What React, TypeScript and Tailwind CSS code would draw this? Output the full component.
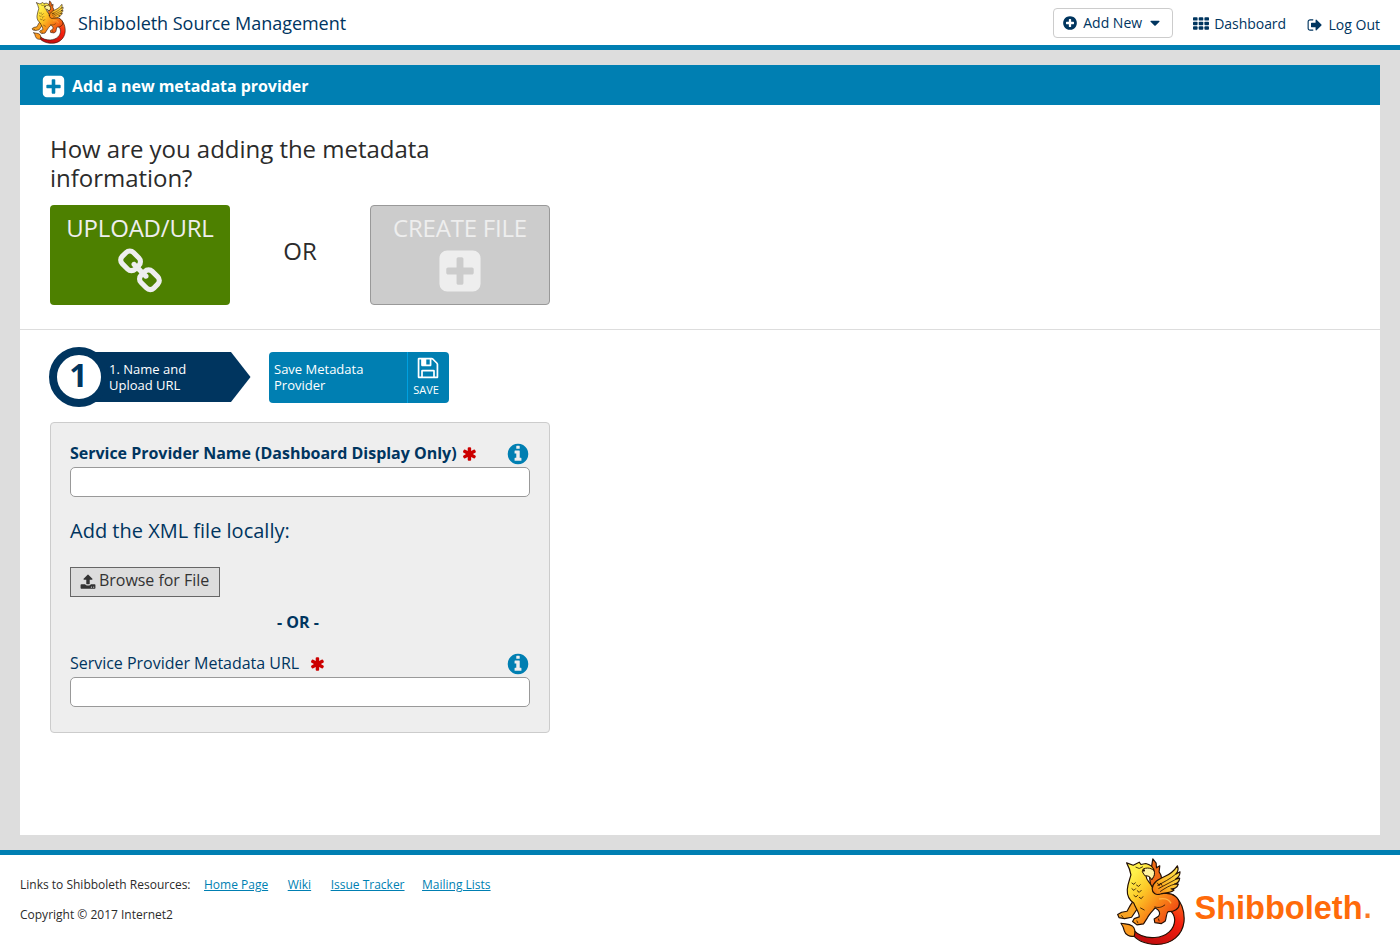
import React from "react";

const PATHS = {
  plusCircle:
    "M1344 960v-128q0-26-19-45t-45-19h-256v-256q0-26-19-45t-45-19h-128q-26 0-45 19t-19 45v256h-256q-26 0-45 19t-19 45v128q0 26 19 45t45 19h256v256q0 26 19 45t45 19h128q26 0 45-19t19-45v-256h256q26 0 45-19t19-45zm320-64q0 209-103 385.5t-279.5 279.5-385.5 103-385.5-103-279.5-279.5-103-385.5 103-385.5 279.5-279.5 385.5-103 385.5 103 279.5 279.5 103 385.5z",
  plusSquare:
    "M1408 960v-128q0-26-19-45t-45-19h-320v-320q0-26-19-45t-45-19h-128q-26 0-45 19t-19 45v320h-320q-26 0-45 19t-19 45v128q0 26 19 45t45 19h320v320q0 26 19 45t45 19h128q26 0 45-19t19-45v-320h320q26 0 45-19t19-45zm256-544v960q0 119-84.5 203.5t-203.5 84.5h-960q-119 0-203.5-84.5t-84.5-203.5v-960q0-119 84.5-203.5t203.5-84.5h960q119 0 203.5 84.5t84.5 203.5z",
  chain:
    "M1520 1216q0-40-28-68l-208-208q-28-28-68-28-42 0-72 32 3 3 19 18.5t21.5 21.5 15 19 13 25.5 3.5 27.5q0 40-28 68t-68 28q-15 0-27.5-3.5t-25.5-13-19-15-21.5-21.5-18.5-19q-33 31-33 73 0 40 28 68l206 207q27 27 68 27 40 0 68-26l147-146q28-28 28-67zm-703-705q0-40-28-68l-206-207q-28-28-68-28-39 0-68 27l-147 146q-28 28-28 67 0 40 28 68l208 208q27 27 68 27 42 0 72-31-3-3-19-18.5t-21.5-21.5-15-19-13-25.5-3.5-27.5q0-40 28-68t68-28q15 0 27.5 3.5t25.5 13 19 15 21.5 21.5 18.5 19q33-31 33-73zm895 705q0 120-85 203l-147 146q-83 83-203 83-121 0-204-85l-206-207q-83-83-83-203 0-123 88-209l-88-88q-86 88-208 88-120 0-204-84l-208-208q-84-84-84-204t85-203l147-146q83-83 203-83 121 0 204 85l206 207q83 83 83 203 0 123-88 209l88 88q86-88 208-88 120 0 204 84l208 208q84 84 84 204z",
  caretDown:
    "M1408 704q0 26-19 45l-448 448q-19 19-45 19t-45-19l-448-448q-19-19-19-45t19-45 45-19h896q26 0 45 19t19 45z",
  signOut:
    "M704 1440q0 4 1 20t.5 26.5-3 23.5-10 19.5-20.5 6.5h-320q-119 0-203.5-84.5t-84.5-203.5v-704q0-119 84.5-203.5t203.5-84.5h320q13 0 22.5 9.5t9.5 22.5q0 4 1 20t.5 26.5-3 23.5-10 19.5-20.5 6.5h-320q-66 0-113 47t-47 113v704q0 66 47 113t113 47h312l11.5 1 11.5 3 8 5.5 7 9 2 13.5zm928-544q0 26-19 45l-544 544q-19 19-45 19t-45-19-19-45v-288h-448q-26 0-45-19t-19-45v-384q0-26 19-45t45-19h448v-288q0-26 19-45t45-19 45 19l544 544q19 19 19 45z",
  asterisk:
    "M1482 1050q46 26 59.5 77.5t-12.5 97.5l-64 110q-26 46-77.5 59.5t-97.5-12.5l-266-153v307q0 52-38 90t-90 38h-128q-52 0-90-38t-38-90v-307l-266 153q-46 26-97.5 12.5t-77.5-59.5l-64-110q-26-46-12.5-97.5t59.5-77.5l266-154-266-154q-46-26-59.5-77.5t12.5-97.5l64-110q26-46 77.5-59.5t97.5 12.5l266 153v-307q0-52 38-90t90-38h128q52 0 90 38t38 90v307l266-153q46-26 97.5-12.5t77.5 59.5l64 110q26 46 12.5 97.5t-59.5 77.5l-266 154z",
  infoCircle:
    "M1152 1376v-160q0-14-9-23t-23-9h-96v-512q0-14-9-23t-23-9h-320q-14 0-23 9t-9 23v160q0 14 9 23t23 9h96v320h-96q-14 0-23 9t-9 23v160q0 14 9 23t23 9h448q14 0 23-9t9-23zm-128-896v-160q0-14-9-23t-23-9h-192q-14 0-23 9t-9 23v160q0 14 9 23t23 9h192q14 0 23-9t9-23zm640 416q0 209-103 385.5t-279.5 279.5-385.5 103-385.5-103-279.5-279.5-103-385.5 103-385.5 279.5-279.5 385.5-103 385.5 103 279.5 279.5 103 385.5z",
  upload:
    "M1344 1472q0-26-19-45t-45-19-45 19-19 45 19 45 45 19 45-19 19-45zm256 0q0-26-19-45t-45-19-45 19-19 45 19 45 45 19 45-19 19-45zm128-224v320q0 40-28 68t-68 28h-1472q-40 0-68-28t-28-68v-320q0-40 28-68t68-28h427q21 56 70.5 92t110.5 36h256q61 0 110.5-36t70.5-92h427q40 0 68 28t28 68zm-325-648q-17 40-59 40h-256v448q0 26-19 45t-45 19h-256q-26 0-45-19t-19-45v-448h-256q-42 0-59-40-17-39 14-69l448-448q18-19 45-19t45 19l448 448q31 30 14 69z",
  floppy:
    "M512 1536h768v-384h-768v384zm896 0h128v-896q0-14-10-38.5t-20-34.5l-281-281q-10-10-34-20t-39-10v416q0 40-28 68t-68 28h-576q-40 0-68-28t-28-68v-416h-128v1280h128v-416q0-40 28-68t68-28h832q40 0 68 28t28 68v416zm-384-928v-320q0-13-9.5-22.5t-22.5-9.5h-192q-13 0-22.5 9.5t-9.5 22.5v320q0 13 9.5 22.5t22.5 9.5h192q13 0 22.5-9.5t9.5-22.5zm640 32v928q0 40-28 68t-68 28h-1344q-40 0-68-28t-28-68v-1344q0-40 28-68t68-28h928q40 0 88 20t76 48l280 280q28 28 48 76t20 88z",
};

function Icon({ name, className }: { name: keyof typeof PATHS; className: string }) {
  return (
    <svg viewBox="0 0 1792 1792" fill="currentColor" className={`shrink-0 ${className}`} aria-hidden="true">
      <path d={PATHS[name]} />
    </svg>
  );
}

function GridIcon({ className }: { className: string }) {
  return (
    <svg viewBox="0 0 1792 1792" fill="currentColor" className={`shrink-0 ${className}`} aria-hidden="true">
      {[128, 640, 1152].map((y) =>
        [0, 640, 1280].map((x) => <rect key={`${x}-${y}`} x={x} y={y} width="512" height="384" rx="96" />),
      )}
    </svg>
  );
}

function Griffin({ id, className }: { id: string; className: string }) {
  const body = `${id}-body`;
  const tail = `${id}-tail`;
  const wing = `${id}-wing`;
  return (
    <svg viewBox="21 21 208 267" className={`shrink-0 ${className}`} aria-hidden="true">
      <defs>
        <linearGradient id={body} gradientUnits="userSpaceOnUse" x1="75" y1="70" x2="215" y2="190">
          <stop offset="0" stopColor="#fff04a" />
          <stop offset=".3" stopColor="#fdc928" />
          <stop offset=".6" stopColor="#f98a18" />
          <stop offset="1" stopColor="#ee3a12" />
        </linearGradient>
        <linearGradient id={tail} gradientUnits="userSpaceOnUse" x1="200" y1="140" x2="120" y2="275">
          <stop offset="0" stopColor="#f6701a" />
          <stop offset=".4" stopColor="#f5200f" />
          <stop offset="1" stopColor="#c40d0d" />
        </linearGradient>
        <linearGradient id={wing} gradientUnits="userSpaceOnUse" x1="135" y1="125" x2="205" y2="60">
          <stop offset="0" stopColor="#f47a12" />
          <stop offset=".4" stopColor="#fdb526" />
          <stop offset="1" stopColor="#ffe14a" />
        </linearGradient>
      </defs>
      <g stroke="#241004" strokeWidth="3.5" strokeLinejoin="round" strokeLinecap="round">
        <path fill={`url(#${tail})`} d="M192 134C218 150 229 184 226 216C221 256 189 284 143 284C107 283 79 268 66 247L73 240C90 258 112 265 138 263C175 260 197 238 198 210C198 196 192 188 182 180Z" />
        <path fill="#fb9a20" d="M36 220C49 223 60 222 70 228C79 235 79 248 76 259C62 262 49 254 46 243C44 234 41 227 36 220Z" />
        <path fill="#f06a14" d="M117 48L128 50L132 26L142 39L143 53L153 47L151 65C160 77 160 94 153 108L126 108Z" />
        <path fill="#f9a322" d="M76 150C66 160 60 174 54 184L38 187L26 194L30 203L47 206L68 202L88 172Z" />
        <path fill={`url(#${body})`} d="M53 38L73 45L91 36L96 43L111 40C124 43 135 53 137 66C138 76 132 83 129 88C125 79 116 75 111 76C112 91 124 97 128 108C138 126 153 132 171 130C195 129 212 145 212 162C212 176 196 186 178 185C171 192 174 204 169 214L158 221L138 218L136 207L149 199C157 190 151 180 139 174C130 184 121 192 116 203L104 222L84 225L71 215L76 206L91 201C92 187 80 175 75 160C62 151 54 137 55 119C56 101 63 87 66 74C64 63 59 49 53 38Z" />
        <path fill="#fff2a0" d="M104 56C121 49 136 58 137 67C138 77 132 84 128 88C124 78 115 76 108 77L101 66Z" strokeWidth="3" />
        <path fill={`url(#${wing})`} d="M130 116C132 96 149 88 166 80C183 73 197 61 206 47C210 56 208 65 201 72L214 65C214 76 209 83 201 87L213 84C212 94 205 100 198 102L209 102C206 113 195 117 187 116L196 120C183 131 165 128 155 132C141 137 130 128 130 116Z" />
        <path fill="none" strokeWidth="2.5" d="M147 106C164 96 184 87 200 73M150 115C167 106 184 97 201 88M155 124C170 113 184 106 198 102M146 99L151 107L155 99L160 106" />
        <path fill="none" strokeWidth="2.5" d="M81 51L91 55L101 50M69 99L75 103L79 98M83 105L89 109L94 104M69 116L75 121L80 116M85 122L91 127L97 121M75 136L81 141L86 136M91 142L97 146L102 140M138 171C152 175 160 171 168 165M95 174L106 180M38 197L42 202M84 213L87 219M149 207L151 213" />
      </g>
      <circle cx="105" cy="61" r="3.5" fill="#241004" />
      <path d="M151 147Q177 142 187 160" stroke="#ffb043" strokeWidth="4" fill="none" />
    </svg>
  );
}

function Field({ label, gap, bold }: { label: string; gap: string; bold?: boolean }) {
  return (
    <div>
      <div className="flex h-[26px] items-center">
        <span className={bold ? "pb-[2px] text-[16px] font-bold tracking-[-0.02px]" : "pb-[2px] text-[16px] tracking-[-0.02px]"}>
          {label}
        </span>
        <Icon name="asterisk" className={`size-4 text-[#cc0000] ${gap}`} />
        <Icon name="infoCircle" className="ml-auto size-6 text-[#007fb2]" />
      </div>
      <input className="block h-[30px] w-full rounded-[5px] border border-[#999] bg-white px-2 outline-none" />
    </div>
  );
}

export default function App() {
  return (
    <div className="flex h-[950px] w-[1400px] flex-col overflow-hidden bg-white font-['Open_Sans',sans-serif] text-[#2b2b2b]">
      <header className="flex h-[50px] shrink-0 items-start border-b-[5px] border-[#007fb2] pr-5 pl-[31px] text-[#00355f]">
        <Griffin id="top" className="h-[44px] w-[35px]" />
        <h1 className="ml-3 pt-[9px] text-[18px] leading-[28px] tracking-[-0.03px] whitespace-nowrap">Shibboleth Source Management</h1>
        <nav className="ml-auto flex items-start text-[14px] leading-5">
          <button className="mt-2 flex h-[30px] w-[120px] items-center rounded-[4px] border border-[#ccc] pl-2">
            <Icon name="plusCircle" className="size-4" />
            <span className="ml-[5px]">Add New</span>
            <Icon name="caretDown" className="ml-[5px] size-4" />
          </button>
          <a className="mt-[14px] ml-5 flex items-center">
            <GridIcon className="size-4" />
            <span className="ml-[5px] tracking-[-0.05px]">Dashboard</span>
          </a>
          <a className="mt-[15px] ml-[21px] flex items-center">
            <Icon name="signOut" className="size-4" />
            <span className="ml-[5.5px]">Log Out</span>
          </a>
        </nav>
      </header>

      <main className="h-[800px] shrink-0 bg-[#ddd] px-5 py-[15px]">
        <section className="h-[770px] bg-white">
          <div className="flex h-10 items-center bg-[#007fb2] pl-[21px] text-white">
            <Icon name="plusSquare" className="mt-[2px] size-[25px]" />
            <h2 className="ml-[6px] pt-[2px] text-[16px] font-bold tracking-[-0.04px]">Add a new metadata provider</h2>
          </div>

          <div className="h-[225px] border-b border-[#ddd] px-[30px] pt-[29px]">
            <h3 className="w-[500px] pr-20 text-[24px] leading-[29px] tracking-[-0.03px]">How are you adding the metadata information?</h3>
            <div className="mt-[13px] flex w-[500px] items-center justify-between text-[24px]">
              <button className="flex h-[100px] w-[180px] flex-col items-center rounded-[4px] bg-[#4d8000] pt-[6px] text-[#eee]">
                <span className="leading-[34px] tracking-[-0.2px]">UPLOAD/URL</span>
                <Icon name="chain" className="mt-[3px] size-[48px]" />
              </button>
              <span className="pb-2">OR</span>
              <button className="flex h-[100px] w-[180px] flex-col items-center rounded-[4px] border border-[#999] bg-[#ccc] pt-[5px] text-[#eee]">
                <span className="leading-[34px] tracking-[-0.2px]">CREATE FILE</span>
                <Icon name="plusSquare" className="mt-[2px] size-[48px]" />
              </button>
            </div>
          </div>

          <div className="px-[30px] pt-[17px]">
            <div className="-ml-px flex h-[60px] items-center text-[13px] leading-4 font-medium text-white">
              <div className="z-10 flex size-[60px] shrink-0 items-center justify-center rounded-full border-8 border-[#00355f] bg-white text-[32px] leading-none font-bold text-[#00355f]">
                <span className="pr-px pb-[5px]">1</span>
              </div>
              <div className="-ml-5 flex h-[50px] w-[162px] items-center bg-[#00355f] pl-5 [clip-path:polygon(0_0,142px_0,161.5px_50%,142px_100%,0_100%)]">
                <span className="w-[100px]">1. Name and Upload URL</span>
              </div>
              <button className="ml-[18px] flex h-[51px] w-[180px] items-stretch rounded-[4px] bg-[#007fb2] text-left">
                <span className="flex w-[138px] items-center pr-5 pl-[5px]">Save Metadata Provider</span>
                <span className="flex w-[42px] flex-col items-center border-l border-[#00a0e0] pt-1 pr-[5px] text-[11px]">
                  <Icon name="floppy" className="ml-[3px] size-6" />
                  <span className="mt-[2px] leading-4">SAVE</span>
                </span>
              </button>
            </div>

            <div className="mt-[15px] h-[311px] w-[500px] rounded-[4px] border border-[#ccc] bg-[#eee] px-[19px] pt-[18px] text-[#00355f]">
              <Field label="Service Provider Name (Dashboard Display Only)" gap="ml-[5px] -mt-px" bold />
              <h4 className="mt-5 text-[20px] leading-[28px]">Add the XML file locally:</h4>
              <button className="mt-[22px] flex h-[30px] w-[150px] items-center border border-[#666] bg-[#ddd] pl-[9px] text-[16px] text-[#333]">
                <Icon name="upload" className="size-4" />
                <span className="ml-[3px] pb-[4px] tracking-[-0.04px] whitespace-nowrap">Browse for File</span>
              </button>
              <div className="mt-[13px] mb-[17px] pr-1 text-center text-[16px] leading-6 font-bold">- OR -</div>
              <Field label="Service Provider Metadata URL" gap="ml-[11px]" />
            </div>
          </div>
        </section>
      </main>

      <footer className="flex h-[100px] shrink-0 justify-between border-t-[5px] border-[#007fb2] pl-5 text-[12px]">
        <div className="pt-[21px]">
          <div className="flex leading-[18px]">
            <span>Links to Shibboleth Resources:</span>
            <a className="ml-[13.5px] text-[#007fb2] underline">Home Page</a>
            <a className="ml-[19.5px] text-[#007fb2] underline">Wiki</a>
            <a className="ml-[19.5px] text-[#007fb2] underline">Issue Tracker</a>
            <a className="ml-[17.5px] text-[#007fb2] underline">Mailing Lists</a>
          </div>
          <p className="mt-3 leading-[18px]">Copyright © 2017 Internet2</p>
        </div>
        <div className="flex w-[284px] items-start pt-[2px]">
          <Griffin id="bottom" className="h-[89px] w-[69px]" />
          <svg viewBox="0 0 190 50" className="mt-[25px] ml-[9px] h-[50px] w-[190px]">
            <text x="0.5" y="36.5" textLength="168" lengthAdjust="spacingAndGlyphs" className="fill-[#ff6a0a] font-['Liberation_Sans',sans-serif] text-[34px] font-bold">
              Shibboleth
            </text>
            <rect x="171.5" y="31.5" width="4" height="4.5" fill="#fb7a22" />
          </svg>
        </div>
      </footer>
    </div>
  );
}
